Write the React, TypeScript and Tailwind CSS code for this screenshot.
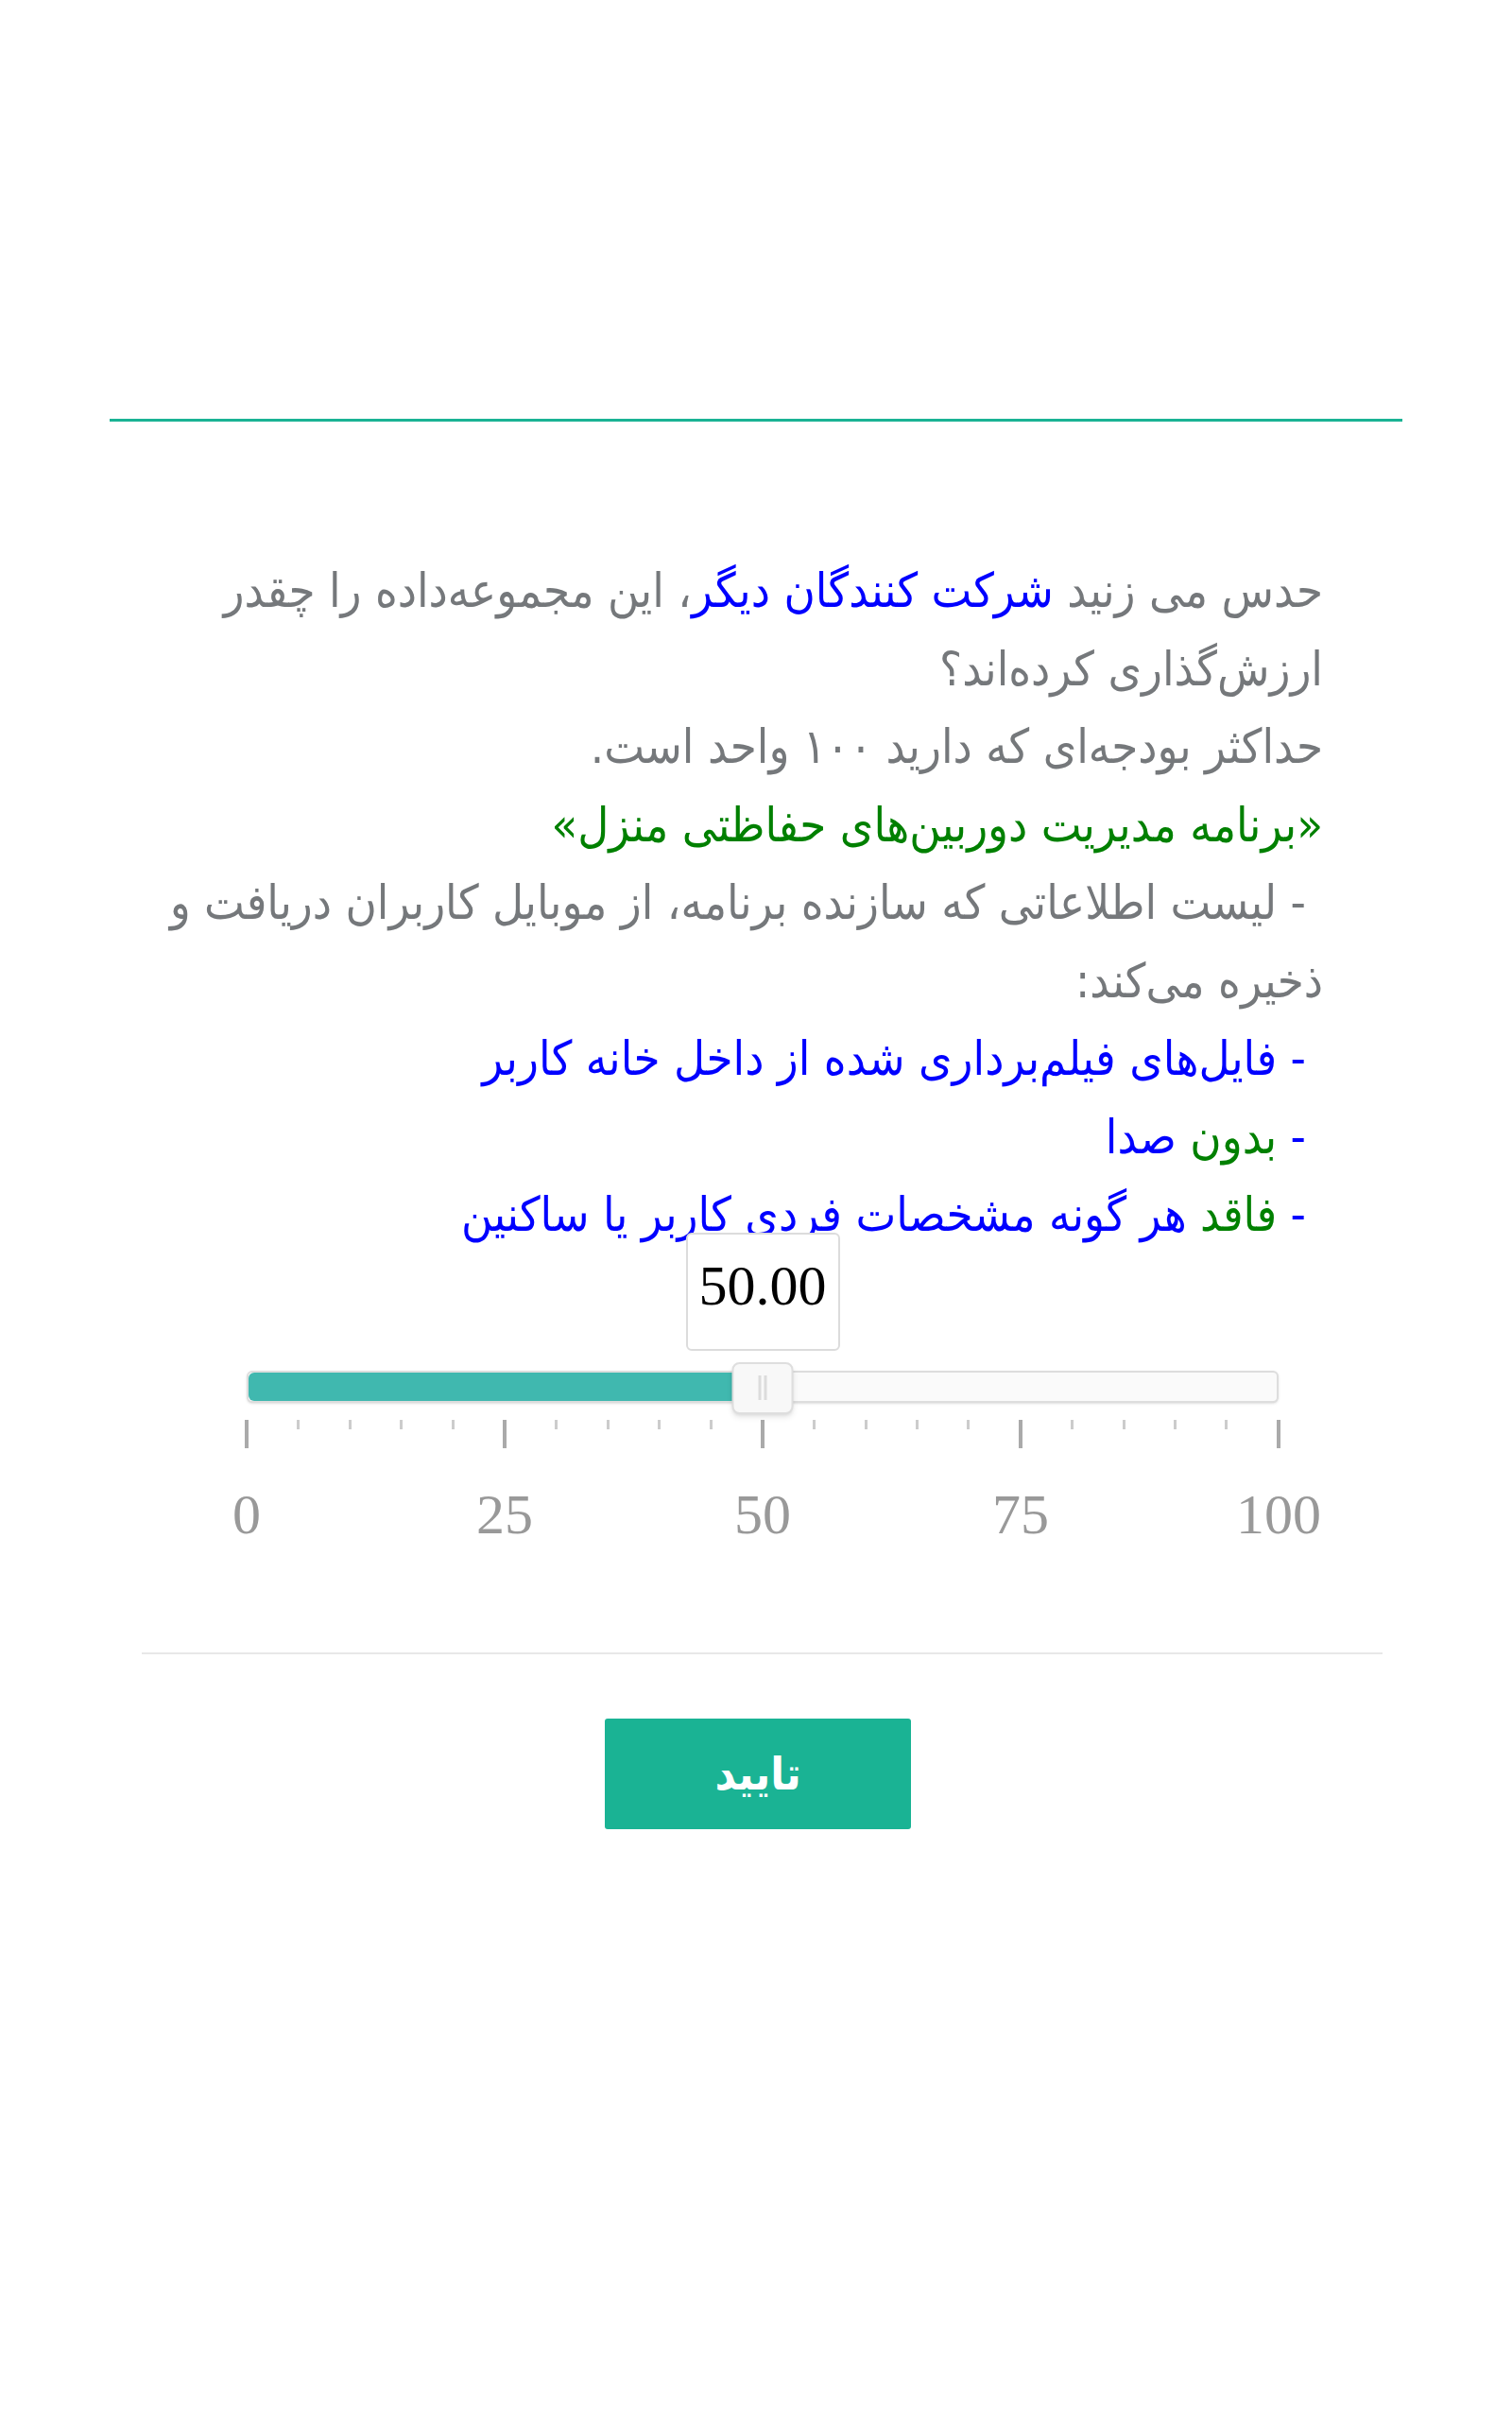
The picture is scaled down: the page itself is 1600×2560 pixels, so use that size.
const ticks = Array.from({ length: 21 }, (_, i) => i);
const labels = ["0", "25", "50", "75", "100"];

const Blue = ({ children }: { children: React.ReactNode }) => <span className="text-[#0000ff]">{children}</span>;
const Green = ({ children }: { children: React.ReactNode }) => <span className="text-[#008000]">{children}</span>;

const RangeSlider = () => {
    return (
        <div className="relative ml-[261px] w-[1092px]">
            <div className="flex h-[125px] justify-center">
                <div className="w-[163px] rounded-md border-2 border-[#dcdcdc] bg-white pt-[24px] text-center font-['Liberation_Serif',serif] text-[60px] leading-[60px] text-black">
                    50.00
                </div>
            </div>
            <div className="relative mt-[21px] h-[34px] rounded-md border-2 border-[#dddddd] bg-[#fafafa] shadow-sm">
                <div className="h-full w-1/2 rounded-l-md bg-[#40b8af]" />
                <div className="absolute left-1/2 top-[-11px] flex h-[55px] w-[65px] -translate-x-1/2 items-center justify-center gap-[3px] rounded-lg border-2 border-[#dedede] bg-[#f8f8f8] shadow-md">
                    <div className="h-[26px] w-[3px] bg-[#dcdcdc]" />
                    <div className="h-[26px] w-[3px] bg-[#dcdcdc]" />
                </div>
            </div>
            <div className="mt-[18px] flex h-[30px] -mx-[2px] items-start justify-between">
                {ticks.map((t) =>
                    t % 5 === 0 ? (
                        <div key={t} className="h-[30px] w-[4px] bg-[#aaaaaa]" />
                    ) : (
                        <div key={t} className="h-[10px] w-[3px] bg-[#cccccc]" />
                    )
                )}
            </div>
            <div className="mt-[40px] flex justify-between">
                {labels.map((l) => (
                    <div key={l} className="flex w-0 justify-center">
                        <span className="font-['Liberation_Serif',serif] text-[60px] leading-[60px] text-[#999999]">{l}</span>
                    </div>
                ))}
            </div>
        </div>
    );
};

export default function App() {
    return (
        <div className="min-h-screen w-full bg-white font-['DejaVu_Sans_Condensed','DejaVu_Sans',sans-serif] font-stretch-condensed">
            <div className="mx-[116px] h-[446px] border-b-[3px] border-[#1ab394]" />
            <div dir="rtl" className="ml-[160px] mt-[138px] w-[1240px] text-[50.5px] leading-[82.5px] text-[#75787b]">
                <p className="pl-[66px]">
                    حدس می زنید <Blue>شرکت کنندگان دیگر</Blue>، این مجموعه‌داده را چقدر ارزش‌گذاری  کرده‌اند؟
                </p>
                <p>حداکثر بودجه‌ای که دارید ۱۰۰ واحد است.</p>
                <p>
                    <Green>«برنامه مدیریت دوربین‌های حفاظتی منزل»</Green>
                </p>
                <p className="indent-[18px]">- لیست اطلاعاتی که سازنده برنامه، از موبایل کاربران دریافت و ذخیره می‌کند:</p>
                <p className="pr-[18px] text-[#0000ff]">- فایل‌های فیلم‌برداری شده از داخل خانه کاربر</p>
                <p className="pr-[18px] text-[#0000ff]">
                    - <Green>بدون</Green> صدا
                </p>
                <p className="pr-[18px] text-[#0000ff]">
                    - <Green>فاقد</Green> هر گونه مشخصات فردی کاربر یا ساکنین
                </p>
            </div>
            <div className="-mt-[23px]">
                <RangeSlider />
            </div>
            <div className="ml-[150px] mt-[116px] h-[2px] w-[1313px] bg-[#e8e8e8]" />
            <div className="mt-[68px] flex justify-center">
                <button className="ml-[4px] h-[117px] w-[324px] rounded-[3px] bg-[#1ab394] text-[48px] font-bold font-stretch-normal text-white">تایید</button>
            </div>
        </div>
    );
}
